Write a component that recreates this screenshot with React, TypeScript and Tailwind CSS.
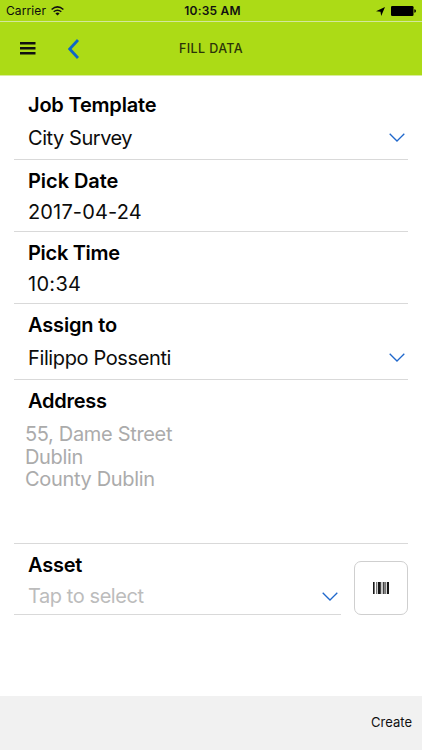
import React from "react";

function ChevronDown({ className = "" }: { className?: string }) {
  return (
    <svg className={className} width="16" height="9" viewBox="0 0 16 9" fill="none" stroke="#2068cc" strokeWidth="1.3">
      <path d="M0.7 0.8 8 8 15.3 0.8" />
    </svg>
  );
}

function Label({ children, className = "tracking-[-0.15px]" }: { children: React.ReactNode; className?: string }) {
  return <div className={`h-6 text-[20px] leading-6 font-semibold whitespace-nowrap text-black ${className}`}>{children}</div>;
}

function Value({ children, className = "" }: { children: React.ReactNode; className?: string }) {
  return <div className={`h-6 text-[20px] leading-6 whitespace-nowrap ${className}`}>{children}</div>;
}

export default function App() {
  return (
    <div className="flex h-[750px] w-[422px] flex-col overflow-hidden bg-white font-['Inter','Liberation_Sans',sans-serif] text-[#0c0c0c]">
      <header className="h-[76px] shrink-0 border-b border-[#d9ec9a] bg-[#acdb16]">
        <div className="grid h-[22px] grid-cols-3 border-b border-[#d3e79c] px-[6px] text-[12px] leading-[22px]">
          <div className="flex items-center gap-[5px]">
            <span className="tracking-[0.1px]">Carrier</span>
            <svg width="13" height="10" viewBox="0 0 13 10" fill="none" stroke="#111" strokeWidth="1.5">
              <path d="M0.6 3.5Q6.5-1.7 12.4 3.5" />
              <path d="M2.7 5.8Q6.5 2.6 10.3 5.8" />
              <path d="M4.4 7.4Q6.5 5.7 8.6 7.4L6.5 9.6Z" fill="#111" stroke="none" />
            </svg>
          </div>
          <div className="pl-[3px] text-center font-semibold tracking-[0.2px] whitespace-nowrap text-[#111]">10:35 AM</div>
          <div className="flex items-center justify-end gap-[6px]">
            <svg width="9" height="9" viewBox="0 0 9 9" fill="#000">
              <path d="M9 0 5.2 9 4.5 4.7 0 4.2Z" />
            </svg>
            <svg width="25" height="10" viewBox="0 0 25 10" fill="#000">
              <rect x="0" y="0" width="22.5" height="10" rx="1.3" />
              <path d="M23.3 3.3Q25 3.5 25 5T23.3 6.7Z" />
            </svg>
          </div>
        </div>
        <nav className="grid h-[53px] grid-cols-3 items-center px-5">
          <div className="flex items-center">
            <svg width="16" height="13" viewBox="0 0 16 13" fill="#111">
              <path d="M0 0H15.5V2.4H0ZM0 5H15.5V7.4H0ZM0 10H15.5V12.4H0Z" />
            </svg>
            <svg className="mt-px ml-8" width="11" height="20" viewBox="0 0 11 20" fill="none" stroke="#0f67c6" strokeWidth="2.8">
              <path d="M10 1 1.7 10 10 19" />
            </svg>
          </div>
          <h1 className="pt-[2px] text-center text-[12.5px] font-medium tracking-[0.4px] whitespace-nowrap text-[#2b3409]">FILL DATA</h1>
        </nav>
      </header>

      <main className="flex-1 px-[14px]">
        <section className="h-[84px] border-b border-[#d9d9d9] pt-[17px] pl-[14px]">
          <Label className="tracking-[-0.2px]">Job Template</Label>
          <div className="mt-[9px] flex items-center justify-between pr-[3px]">
            <Value className="tracking-[-0.45px]">City Survey</Value>
            <ChevronDown className="mb-[2px]" />
          </div>
        </section>
        <section className="h-[72px] border-b border-[#d9d9d9] pt-[9px] pl-[14px]">
          <Label className="tracking-[-0.05px]">Pick Date</Label>
          <Value className="mt-[7px] tracking-[0.15px]">2017-04-24</Value>
        </section>
        <section className="h-[72px] border-b border-[#d9d9d9] pt-[9px] pl-[14px]">
          <Label className="tracking-[-0.3px]">Pick Time</Label>
          <Value className="mt-[7px] tracking-[0.3px]">10:34</Value>
        </section>
        <section className="h-[76px] border-b border-[#d9d9d9] pt-[9px] pl-[14px]">
          <Label>Assign to</Label>
          <div className="mt-[9px] flex items-center justify-between pr-[3px]">
            <Value className="tracking-[-0.38px]">Filippo Possenti</Value>
            <ChevronDown className="mb-[2px]" />
          </div>
        </section>
        <section className="h-[164px] border-b border-[#d9d9d9] pt-[9px] pl-[14px]">
          <Label className="tracking-[-0.25px]">Address</Label>
          <div className="mt-[10px] -ml-[3px] text-[20px] leading-[22.5px] tracking-[-0.33px] whitespace-nowrap text-[#ababab]">
            <div>55, Dame Street</div>
            <div>Dublin</div>
            <div>County Dublin</div>
          </div>
        </section>
        <div className="flex justify-between">
          <section className="h-[71px] w-[327px] border-b border-[#d9d9d9] pt-[9px] pl-[14px]">
            <Label className="tracking-[-0.25px]">Asset</Label>
            <div className="mt-[7px] flex items-center justify-between pr-[3px]">
              <Value className="tracking-[-0.43px] text-[#bcbcbc]">Tap to select</Value>
              <ChevronDown />
            </div>
          </section>
          <button className="mt-[17px] flex h-[54px] w-[54px] items-center justify-center rounded-[7px] border border-[#cfcfcf]">
            <svg width="16" height="12" viewBox="0 0 16 12" fill="#161616">
              <path d="M0 0H1.6V12H0ZM4.8 0H7.8V12H4.8ZM10.2 0H11.5V12H10.2ZM14 0H16V12H14Z" />
              <path d="M3 0H4V12H3ZM8.6 0H9.4V12H8.6ZM11.9 0H13.3V12H11.9Z" fill="#777" />
            </svg>
          </button>
        </div>
      </main>

      <footer className="flex h-[54px] shrink-0 items-center justify-end bg-[#f1f1f1] pr-[10px] text-[13px] text-[#111]">
        <button>Create</button>
      </footer>
    </div>
  );
}
